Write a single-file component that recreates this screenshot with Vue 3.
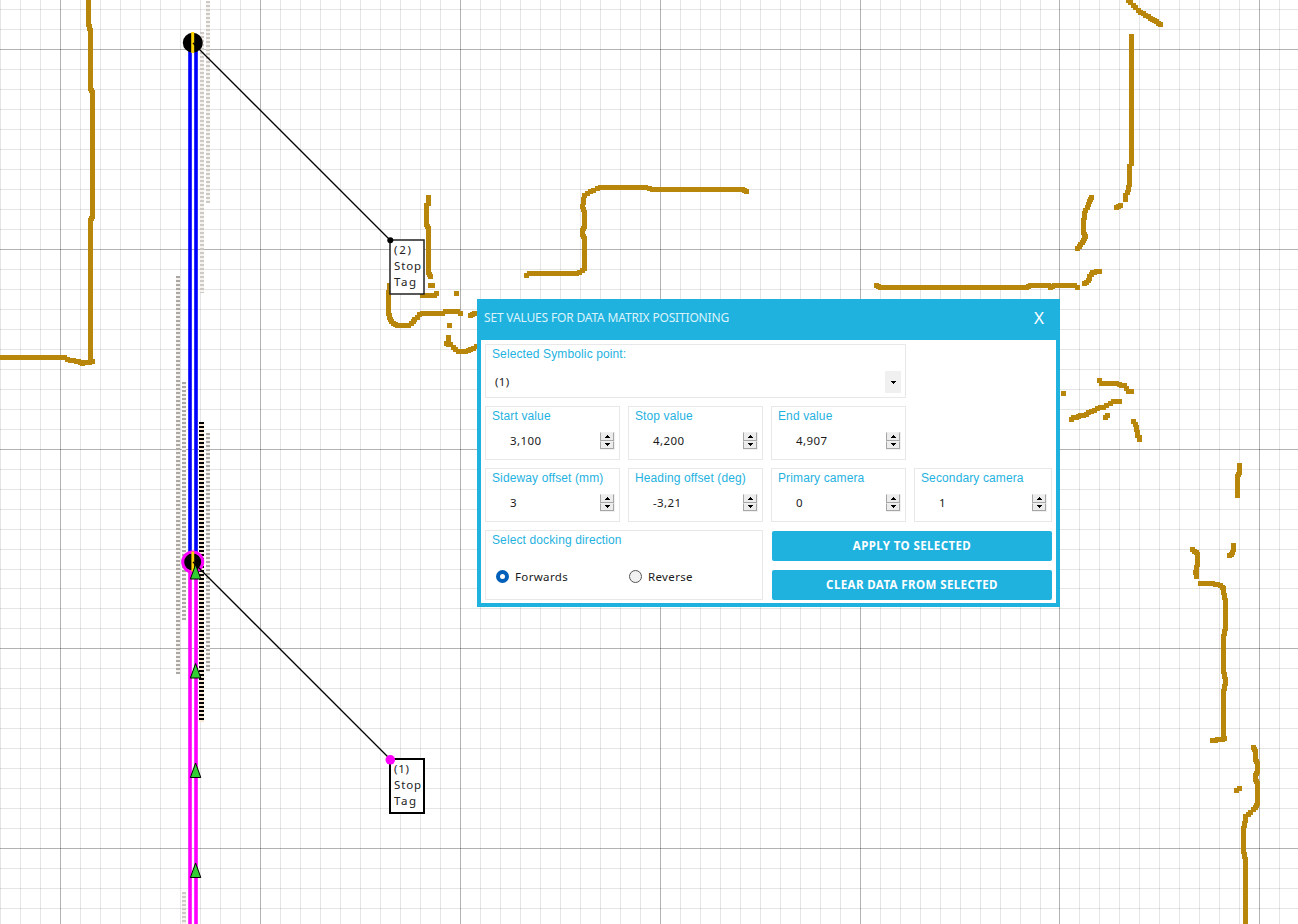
<script setup>
const range = (n, f) => Array.from({ length: n }, (_, i) => f(i))
const columns = range(65, i => ({ p: Math.round(0.4 + i * 19.983), major: i % 10 === 3 }))
const rows = range(47, i => ({ p: Math.round(9.2 + i * 19.975), major: i % 10 === 2 }))

// Laser scan contours; each point is the centre of a 5px cell
const walls = [
  [88, -2, 88, 24, 89, 28, 90, 32, 90, 88, 92, 92, 92, 216, 90, 220, 90, 361, 92, 361, 82, 363, 78, 361, 73, 360, 67, 359, 64, 357, -2, 357],
  [428, 197, 428, 203, 426, 205, 426, 224, 428, 228, 428, 272, 430, 276],
  [430, 285, 432, 285], [456, 293], [436, 293, 434, 295, 422, 295],
  [389, 285, 388, 292, 388, 313, 389, 317, 391, 321, 393, 323, 397, 325, 408, 325, 411, 323, 414, 319, 419, 314, 422, 313, 442, 313, 445, 311, 457, 311, 460, 313],
  [470, 315, 474, 313, 480, 313], [449, 325],
  [448, 337, 448, 341, 446, 343, 450, 344, 455, 349, 458, 351, 465, 351, 470, 349, 476, 346, 480, 346],
  [526, 275, 529, 273, 576, 273, 582, 270, 584, 268, 584, 238, 582, 234, 582, 230, 584, 226, 584, 212, 582, 206, 584, 195, 590, 191, 600, 187, 645, 187, 652, 189, 742, 189, 746, 191],
  [1128, 0, 1140, 12, 1148, 16, 1152, 19, 1156, 21, 1160, 24],
  [1131, 36, 1131, 163, 1129, 166, 1129, 184, 1127, 192, 1125, 195, 1125, 199], [1120, 205, 1116, 207],
  [1091, 197, 1089, 201, 1088, 204, 1085, 210, 1083, 220, 1083, 232, 1085, 236, 1083, 240, 1080, 244, 1077, 248],
  [1099, 271, 1096, 271, 1092, 272, 1089, 276, 1088, 280, 1084, 283],
  [1077, 287, 1074, 285, 1054, 285, 1050, 287, 1048, 285, 1030, 285, 1026, 287, 880, 287, 876, 285],
  [1099, 380, 1101, 383, 1116, 383, 1121, 385, 1124, 385, 1128, 391, 1131, 391], [1063, 393],
  [1071, 419, 1073, 417, 1076, 417, 1080, 415, 1083, 415, 1088, 412, 1100, 407, 1103, 407, 1113, 401, 1119, 401],
  [1105, 417, 1107, 415], [1133, 421, 1135, 424, 1137, 432, 1137, 435, 1139, 437, 1139, 439],
  [1239, 465, 1239, 472, 1237, 476, 1237, 495],
  [1192, 549, 1196, 552, 1197, 556, 1197, 564, 1195, 572, 1196, 576],
  [1233, 545, 1233, 549, 1232, 552, 1229, 555],
  [1200, 583, 1212, 583, 1220, 585, 1223, 588, 1223, 592, 1225, 600, 1225, 628, 1223, 636, 1223, 671, 1225, 679, 1225, 683, 1223, 691, 1223, 737, 1224, 738, 1220, 739, 1212, 740],
  [1253, 747, 1255, 751, 1255, 759, 1257, 763, 1257, 771, 1255, 775, 1255, 779, 1257, 783, 1257, 803, 1255, 807, 1245, 816, 1245, 820, 1243, 828, 1243, 851, 1245, 859, 1245, 926],
  [1236, 790, 1239, 788],
]

function cells(pts) {
  const seen = new Set()
  const put = (x, y) => seen.add(`M${Math.round(x) - 2} ${Math.round(y) - 2}h5v5h-5z`)
  put(pts[0], pts[1])
  for (let i = 2; i < pts.length; i += 2) {
    const [x0, y0, x1, y1] = pts.slice(i - 2, i + 2)
    const n = Math.max(1, Math.ceil(Math.hypot(x1 - x0, y1 - y0) / 4))
    for (let k = 1; k <= n; k++) put(x0 + ((x1 - x0) * k) / n, y0 + ((y1 - y0) * k) / n)
  }
  return [...seen].join('')
}
const wallPath = walls.map(cells).join('')

const tapes = [
  { x: 176, w: 4, from: 276, to: 674, tone: 'mid' },
  { x: 182, w: 4, from: 382, to: 620, tone: 'mid' },
  { x: 182, w: 4, from: 892, to: 924, tone: 'light' },
  { x: 200, w: 4, from: 32, to: 293, tone: 'light' },
  { x: 206, w: 4, from: 1, to: 203, tone: 'light' },
  { x: 206, w: 4, from: 433, to: 672, tone: 'mid' },
  { x: 199, w: 5, from: 422, to: 722, tone: 'dark' },
]
const arrows = [563, 662, 761.5, 861.5]

const fields = [
  { label: 'Start value', value: '3,100' },
  { label: 'Stop value', value: '4,200' },
  { label: 'End value', value: '4,907' },
  { label: 'Sideway offset (mm)', value: '3' },
  { label: 'Heading offset (deg)', value: '-3,21' },
  { label: 'Primary camera', value: '0' },
  { label: 'Secondary camera', value: '1' },
]
</script>

<template>
  <main class="stage">
    <svg class="map" width="1298" height="924" viewBox="0 0 1298 924">
      <g shape-rendering="crispEdges">
        <rect v-for="c in columns" :key="'c' + c.p" :x="c.p" y="0" width="1" height="924" :class="c.major ? 'major' : 'minor'" />
        <rect v-for="r in rows" :key="'r' + r.p" x="0" :y="r.p" width="1298" height="1" :class="r.major ? 'major' : 'minor'" />
        <path :d="wallPath" class="wall" />
        <g v-for="(t, i) in tapes" :key="i" :class="t.tone">
          <rect :x="t.x" :y="t.from" :width="t.w" :height="t.to - t.from" class="base" />
          <line :x1="t.x + t.w / 2" :x2="t.x + t.w / 2" :y1="t.from" :y2="t.to" :stroke-width="t.w" class="ticks" />
        </g>
      </g>
      <g class="blue">
        <rect x="188.2" y="43" width="3.6" height="519" />
        <rect x="194.2" y="43" width="3.6" height="519" />
      </g>
      <g class="pink">
        <rect x="188.2" y="562" width="3.6" height="362" />
        <rect x="194.2" y="562" width="3.6" height="362" />
      </g>
      <circle cx="192.8" cy="42.8" r="10" />
      <rect x="191.2" y="32" width="3" height="21" class="gold" />
      <circle cx="192.7" cy="562" r="10" class="ring" />
      <rect x="191.4" y="551.5" width="2.8" height="20" class="gold" />
      <path d="M193 43L390 240M193 562L390 759" class="leader" />
      <path v-for="y in arrows" :key="y" :d="`M195.6 ${y + 1.5}L200.8 ${y + 16}H190.4z`" class="arrow" />
      <rect x="390" y="240" width="34" height="54" class="tag thin" />
      <rect x="390" y="759" width="34" height="54" class="tag" />
      <circle cx="390.3" cy="240.3" r="3" />
      <circle cx="390.3" cy="759.8" r="4.8" class="dot" />
      <g class="tagtext">
        <text x="394" y="254" textLength="17">(2)</text>
        <text x="394" y="270" textLength="27">Stop</text>
        <text x="394" y="286" textLength="22">Tag</text>
        <text x="394" y="773" textLength="15">(1)</text>
        <text x="394" y="789" textLength="27">Stop</text>
        <text x="394" y="805" textLength="22">Tag</text>
      </g>
    </svg>

    <section class="dialog">
      <header>
        <h1>SET VALUES FOR DATA MATRIX POSITIONING</h1>
        <button class="close">X</button>
      </header>
      <div class="body">
        <div class="card point">
          <span class="label">Selected Symbolic point:</span>
          <div class="select">
            <span class="value">(1)</span>
            <span class="drop"><svg width="5" height="3"><path d="M0 0h5v1h-1v1h-1v1h-1v-1h-1v-1h-1z" /></svg></span>
          </div>
        </div>
        <div v-for="(f, i) in fields" :key="f.label" :class="['card', 'field', { first: i === 0 || i === 3 }]">
          <span class="label">{{ f.label }}</span>
          <div class="entry">
            <span class="value">{{ f.value }}</span>
            <span class="spin">
              <i><svg width="5" height="3"><path d="M2 0h1v1h1v1h1v1h-5v-1h1v-1h1z" /></svg></i>
              <i><svg width="5" height="3"><path d="M0 0h5v1h-1v1h-1v1h-1v-1h-1v-1h-1z" /></svg></i>
            </span>
          </div>
        </div>
        <div class="card docking">
          <span class="label">Select docking direction</span>
          <div class="radios">
            <label><span class="radio on"></span>Forwards</label>
            <label><span class="radio"></span>Reverse</label>
          </div>
        </div>
        <div class="actions">
          <button>APPLY TO SELECTED</button>
          <button>CLEAR DATA FROM SELECTED</button>
        </div>
      </div>
    </section>
  </main>
</template>

<style>
body { margin: 0; overflow: hidden; }
</style>

<style scoped>
.stage { position: relative; width: 1298px; height: 924px; background: #fff; overflow: hidden; font-family: "Noto Sans", sans-serif; }
.map { display: block; }
.minor { fill: #000; fill-opacity: .1; }
.major { fill: #000; fill-opacity: .3; }
.wall { fill: #b8860b; }
.base { fill: #f6f3ef; }
.dark .base { fill: #fbe9d7; }
.ticks { stroke-dasharray: 2 2; }
.light .ticks { stroke: #ccc9c6; }
.mid .ticks { stroke: #aaa7a4; }
.dark .ticks { stroke: #000; }
.blue { fill: #00f; }
.pink { fill: #f0f; }
.gold { fill: #ffd500; }
.ring { fill: #000; stroke: #f0f; stroke-width: 3; }
.leader { stroke: #000; stroke-width: 1.3; }
.arrow { fill: #32cd32; stroke: #000; stroke-width: 1; }
.tag { fill: #fff; stroke: #000; stroke-width: 2; }
.tag.thin { stroke: #222; stroke-width: 1.5; }
.dot { fill: #f0f; }
.tagtext { font: 11.5px "Noto Sans", sans-serif; fill: #222; }

.dialog { position: absolute; left: 477px; top: 299px; width: 583px; height: 308px; box-sizing: border-box; background: #1fb2df; padding: 0 4px 4px; display: flex; flex-direction: column; }
header { height: 41px; flex: none; display: flex; align-items: center; justify-content: space-between; padding: 0 12px 4px 3px; box-sizing: border-box; }
h1 { margin: 0; font-size: 12px; font-weight: 400; line-height: 16px; color: #dbf3fa; letter-spacing: -.17px; white-space: nowrap; }
.close { border: 0; background: none; padding: 0; color: #fff; font: 17px/20px "Noto Sans", sans-serif; }
.body { flex: 1; background: #fff; padding: 4px 4px 3px; display: grid; grid-template-columns: 135px 135px 135px 138px; grid-template-rows: 54px 54px 54px 70px; gap: 8px; }
.card { box-sizing: border-box; border: 1px solid #e8e8e8; padding: 2px 4px 0 6px; }
.label { display: block; font: 12px/15px "Liberation Sans", Arial, sans-serif; letter-spacing: .12px; color: #1fb2df; white-space: nowrap; }
.value { font-size: 11.5px; line-height: 16px; letter-spacing: .4px; color: #1a1a1a; padding-bottom: 1px; }
.point { grid-column: 1 / 4; }
.first { grid-column: 1; }
.select { display: flex; justify-content: space-between; align-items: center; padding-left: 3px; height: 22px; margin-top: 9px; }
.drop { width: 16px; height: 22px; background: #f0f0f0; display: flex; align-items: center; justify-content: center; }
.entry { display: flex; justify-content: space-between; align-items: center; padding-left: 18px; height: 18px; margin-top: 8px; }
.spin { width: 15px; height: 18px; box-sizing: border-box; background: #f0f0f0; display: flex; flex-direction: column; padding: 0 1px 1px 0; }
.spin i { flex: 1; display: flex; align-items: center; justify-content: center; background: #ececec; border: 1px solid #a6a6a6; border-top-color: #f0f0f0; }
.docking { grid-column: 1 / 3; }
.radios { display: flex; padding: 20px 0 0 4px; }
.radios label { flex: 0 0 133px; display: flex; align-items: center; gap: 6px; font-size: 11.5px; line-height: 18px; color: #1a1a1a; letter-spacing: .35px; }
.radio { width: 13px; height: 13px; flex: none; box-sizing: border-box; border-radius: 50%; border: 1px solid #555; background: #f1f1f1; margin-bottom: 2px; }
.radio.on { border: 4px solid #005fb8; background: #fff; }
.actions { grid-column: 3 / 5; display: flex; flex-direction: column; gap: 9px; padding: 1px 0 0 1px; }
.actions button { height: 30px; border: 0; border-radius: 2px; padding: 0; background: #1fb2df; color: #fff; font: 700 11.5px/30px "Noto Sans", sans-serif; letter-spacing: .4px; }
</style>
